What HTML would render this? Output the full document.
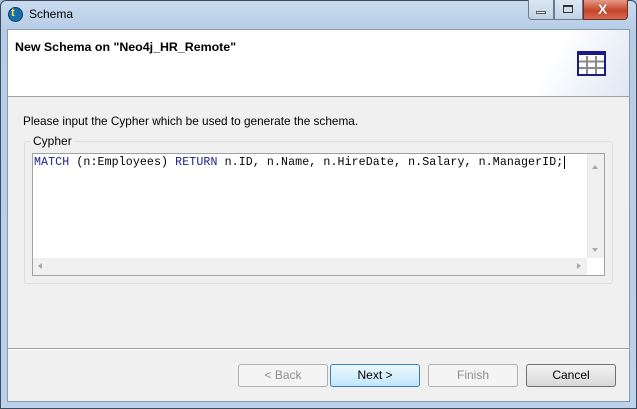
<!DOCTYPE html>
<html><head><style>
*{margin:0;padding:0;box-sizing:border-box}
body{width:637px;height:409px;overflow:hidden;font-family:"Liberation Sans",sans-serif;font-size:12px;background:#a9c4e0;position:relative}
.frame{position:absolute;left:0;top:0;width:637px;height:409px;border:1px solid #3c4a5c;border-radius:6px 6px 0 0;background:linear-gradient(180deg,#c9dbee 0,#b6cde6 30px,#bcd2ea 100%)}
.client{position:absolute;left:7px;top:29px;width:623px;height:373px;background:#f0f0f0;border:1px solid #8a9bb0}
.hdr{position:absolute;left:0;top:0;width:621px;height:67px;background:linear-gradient(120deg,#fff 85%,#dfe6f4 100%);border-bottom:1px solid #a0a0a0}
.abs{position:absolute}
.btn{position:absolute;top:364px;width:90px;height:23px;border:1px solid #707070;border-radius:3px;background:linear-gradient(#f2f2f2,#e6e6e6 50%,#d8d8d8);text-align:center;line-height:21px;font-size:12px}
.dis{border-color:#adb2b5;color:#8d8d8d;background:#f4f4f4}
</style></head><body>
<div class="frame"></div>
<div class="abs" style="left:8px;top:7px;width:15px;height:15px;border-radius:50%;background:#1b6fa8;border:1px solid #0c3d66"></div>
<div class="abs" style="left:11px;top:7px;font-size:11px;color:#e8f060;font-weight:bold">t</div>
<div class="abs" style="left:29px;top:7px;font-size:12px;color:#000">Schema</div>
<div class="abs" style="left:528px;top:0;width:26px;height:20px;border:1px solid #6b7a8c;border-top:none;border-radius:0 0 0 4px;background:linear-gradient(#dce7f3,#c2d3e6)"></div>
<div class="abs" style="left:536px;top:11px;width:10px;height:3px;background:#fff;border:1px solid #555"></div>
<div class="abs" style="left:554px;top:0;width:29px;height:20px;border:1px solid #6b7a8c;border-top:none;background:linear-gradient(#dce7f3,#c2d3e6)"></div>
<div class="abs" style="left:563px;top:5px;width:10px;height:8px;border:1px solid #333;border-top-width:2px"></div>
<div class="abs" style="left:583px;top:0;width:45px;height:20px;border:1px solid #6b2b20;border-top:none;border-radius:0 0 4px 0;background:linear-gradient(#e49a88,#c8452c 55%,#d26a50)"></div>
<div class="abs" style="left:598px;top:1px;color:#fff;font-weight:bold;font-size:14px;text-shadow:0 0 1px #333">X</div>
<div class="client">
 <div class="hdr">
  <div class="abs" style="left:7px;top:10px;font-weight:bold;font-size:12.4px">New Schema on "Neo4j_HR_Remote"</div>
  <svg class="abs" style="left:569px;top:21px" width="30" height="26" viewBox="0 0 30 26"><rect x="1" y="1" width="27" height="23" fill="#fff" stroke="#1a1a8c" stroke-width="2"/><rect x="2" y="2" width="25" height="2" fill="#1a1a8c"/><g stroke="#8a8a8a" stroke-width="2"><line x1="10" y1="5" x2="10" y2="23"/><line x1="19" y1="5" x2="19" y2="23"/><line x1="2" y1="10.5" x2="27" y2="10.5"/><line x1="2" y1="17" x2="27" y2="17"/></g></svg>
 </div>
 <div class="abs" style="left:15px;top:84px;font-size:11.8px">Please input the Cypher which be used to generate the schema.</div>
 <div class="abs" style="left:16px;top:111px;width:589px;height:143px;border:1px solid #d5dfe5;border-radius:3px"></div>
 <div class="abs" style="left:22px;top:104px;background:#f0f0f0;padding:0 3px;font-size:12px">Cypher</div>
 <div class="abs" style="left:24px;top:123px;width:573px;height:123px;border:1px solid #a0a0a0;background:#fff">
  <div class="abs" style="left:1px;top:2px;font-family:'Liberation Mono',monospace;font-size:11.6px;letter-spacing:0.1px;white-space:pre"><span style="color:#20208c">MATCH</span> (n:Employees) <span style="color:#20208c">RETURN</span> n.ID, n.Name, n.HireDate, n.Salary, n.ManagerID;<span style="border-left:1px solid #000;margin-left:1px"></span></div>
  <div class="abs" style="left:554px;top:0;width:17px;height:104px;background:#f0f0f0;border-left:1px solid #e8e8e8"></div>
  <div class="abs" style="left:559px;top:8px;width:0;height:0;border:3px solid transparent;border-bottom:4px solid #a8a8a8"></div>
  <div class="abs" style="left:559px;top:94px;width:0;height:0;border:3px solid transparent;border-top:4px solid #a8a8a8"></div>
  <div class="abs" style="left:0;top:104px;width:554px;height:17px;background:#f0f0f0"></div>
  <div class="abs" style="left:5px;top:109px;width:0;height:0;border:3px solid transparent;border-right:4px solid #a8a8a8;border-left:none"></div>
  <div class="abs" style="left:544px;top:109px;width:0;height:0;border:3px solid transparent;border-left:4px solid #a8a8a8;border-right:none"></div>
 </div>
 <div class="abs" style="left:0;top:318px;width:621px;height:1px;background:#a0a0a0"></div>
 <div class="abs" style="left:0;top:319px;width:621px;height:1px;background:#fff"></div>
</div>
<div class="btn dis" style="left:238px">&lt; Back</div>
<div class="btn" style="left:330px;border-color:#3c7fb1;background:linear-gradient(#eaf6fd,#d9f0fc 50%,#bee6fd)">Next &gt;</div>
<div class="btn dis" style="left:428px">Finish</div>
<div class="btn" style="left:526px">Cancel</div>
</body></html>
